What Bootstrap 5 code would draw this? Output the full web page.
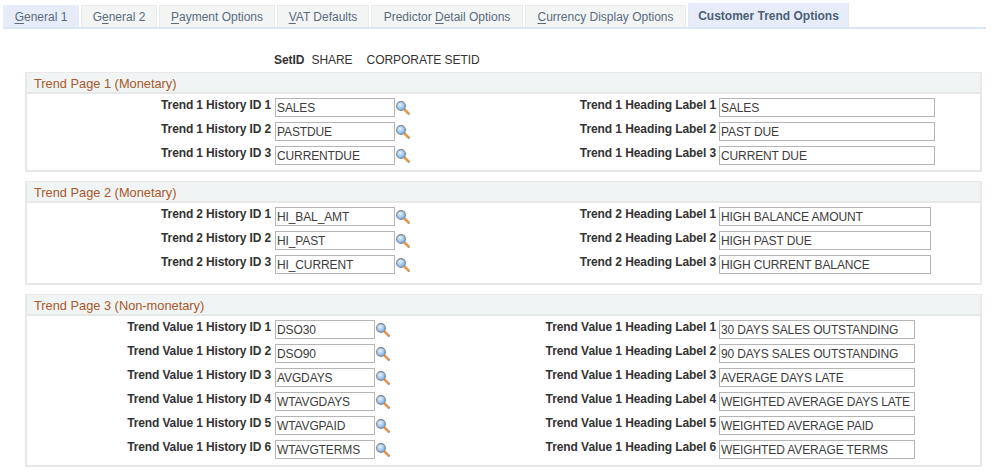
<!DOCTYPE html>
<html lang="en"><head><meta charset="utf-8"><title>Customer Trend Options</title>
<link href="https://cdn.jsdelivr.net/npm/bootstrap@5.3.0/dist/css/bootstrap.min.css" rel="stylesheet">
<style>
body{font-family:"Liberation Sans",Arial,sans-serif;font-size:12px;color:#333;background:#fff;line-height:14px;overflow:hidden}
.tabbar{margin:5px 8px 0 3px;height:24px;border-bottom:2px solid #dbe5f3;gap:2px;align-items:flex-end}
.tabi{height:22px;display:flex;align-items:center;justify-content:center;background:#f3f5f5;border:1px solid #e8eaea;border-bottom:0;color:#5b6b7c;font-size:12px}
.tabi u{text-underline-offset:2px}
.tabi.t-on{background:#e6edf8;border-color:#e6edf8}
.tabi.t-cur{height:24px;background:#e6edf8;border-color:#e3eaf5;color:#4c5f78;font-weight:700}
.setrow{margin:24px 0 0 274px;height:19px;gap:7px;color:#333;letter-spacing:-.05px;line-height:15px}
.setdesc{margin-left:7px}
.grp{margin:0 12px 9px 25px;border:2px solid #e8e8e8;border-top-width:1px}
.grp-h{height:21px;background:#f1f4f4;border-bottom:2px solid #e6e8e8;color:#a8582a;line-height:21px;padding-left:7px;margin:0;font-weight:400;font-size:12.8px}
.grp-b{padding:4px 0 0}
.grp-b.tail{padding-bottom:4px}
.grp-b.tail3{padding-bottom:1px}
.frow{height:24px;display:flex;align-items:flex-start}
.lbl{font-weight:700;text-align:right;flex:none;color:#333;letter-spacing:-.08px}
.lbl.l1{padding-right:1px;letter-spacing:-.14px}
.txt{flex:none;height:19px;border:1px solid #b5b5b5;background:#fff;padding:1px 0 0 1px;color:#3c3c3c;white-space:nowrap;overflow:hidden;line-height:16px;margin-left:3px;letter-spacing:-.12px}
.mag{flex:none;width:16px;height:16px;margin:2px 0 0 1px}
.w-a .l1,.w-b .l1,.w-c .l1{width:245px}
.w-a .i1,.w-b .i1{width:120px}.w-c .i1{width:100px}
.w-a .l2,.w-b .l2{width:304px}.w-c .l2{width:324px}
.w-a .i2{width:216px}.w-b .i2{width:212px}.w-c .i2{width:196px}
</style></head><body>
<svg width="0" height="0" class="d-block position-absolute"><defs>
<radialGradient id="lens" cx="40%" cy="35%" r="70%"><stop offset="0" stop-color="#e6f2fc"/><stop offset="1" stop-color="#6fa6de"/></radialGradient>
<symbol id="mg" viewBox="0 0 16 16">
<path d="M8.5 9.5l4 4" stroke="#e39a52" stroke-width="2.6" stroke-linecap="round"/>
<path d="M12.6 14.6l1-1" stroke="#8a8f96" stroke-width="1.2"/>
<circle cx="5" cy="6" r="4.4" fill="url(#lens)" stroke="#7c8794" stroke-width="1.1"/>
</symbol></defs></svg>

<div class="d-flex tabbar">
<div class="tabi t-on" style="width:76px"><span><u>G</u>eneral 1</span></div>
<div class="tabi" style="width:76px"><span>G<u>e</u>neral 2</span></div>
<div class="tabi" style="width:116px"><span><u>P</u>ayment Options</span></div>
<div class="tabi" style="width:92px"><span><u>V</u>AT Defaults</span></div>
<div class="tabi" style="width:152px"><span>Predictor <u>D</u>etail Options</span></div>
<div class="tabi" style="width:161px"><span><u>C</u>urrency Display Options</span></div>
<div class="tabi t-cur" style="width:161px"><span>Customer Trend Options</span></div>
</div>

<div class="d-flex setrow"><b>SetID</b><span>SHARE</span><span class="setdesc">CORPORATE SETID</span></div>

<section class="grp w-a"><h6 class="grp-h">Trend Page 1 (Monetary)</h6><div class="grp-b">
<div class="frow"><span class="lbl l1">Trend 1 History ID 1</span><span class="txt i1">SALES</span><svg class="mag"><use href="#mg"/></svg><span class="lbl l2">Trend 1 Heading Label 1</span><span class="txt i2">SALES</span></div>
<div class="frow"><span class="lbl l1">Trend 1 History ID 2</span><span class="txt i1">PASTDUE</span><svg class="mag"><use href="#mg"/></svg><span class="lbl l2">Trend 1 Heading Label 2</span><span class="txt i2">PAST DUE</span></div>
<div class="frow"><span class="lbl l1">Trend 1 History ID 3</span><span class="txt i1">CURRENTDUE</span><svg class="mag"><use href="#mg"/></svg><span class="lbl l2">Trend 1 Heading Label 3</span><span class="txt i2">CURRENT DUE</span></div>
</div></section>

<section class="grp w-b"><h6 class="grp-h">Trend Page 2 (Monetary)</h6><div class="grp-b tail">
<div class="frow"><span class="lbl l1">Trend 2 History ID 1</span><span class="txt i1">HI_BAL_AMT</span><svg class="mag"><use href="#mg"/></svg><span class="lbl l2">Trend 2 Heading Label 1</span><span class="txt i2">HIGH BALANCE AMOUNT</span></div>
<div class="frow"><span class="lbl l1">Trend 2 History ID 2</span><span class="txt i1">HI_PAST</span><svg class="mag"><use href="#mg"/></svg><span class="lbl l2">Trend 2 Heading Label 2</span><span class="txt i2">HIGH PAST DUE</span></div>
<div class="frow"><span class="lbl l1">Trend 2 History ID 3</span><span class="txt i1">HI_CURRENT</span><svg class="mag"><use href="#mg"/></svg><span class="lbl l2">Trend 2 Heading Label 3</span><span class="txt i2">HIGH CURRENT BALANCE</span></div>
</div></section>

<section class="grp w-c"><h6 class="grp-h">Trend Page 3 (Non-monetary)</h6><div class="grp-b tail3">
<div class="frow"><span class="lbl l1">Trend Value 1 History ID 1</span><span class="txt i1">DSO30</span><svg class="mag"><use href="#mg"/></svg><span class="lbl l2">Trend Value 1 Heading Label 1</span><span class="txt i2">30 DAYS SALES OUTSTANDING</span></div>
<div class="frow"><span class="lbl l1">Trend Value 1 History ID 2</span><span class="txt i1">DSO90</span><svg class="mag"><use href="#mg"/></svg><span class="lbl l2">Trend Value 1 Heading Label 2</span><span class="txt i2">90 DAYS SALES OUTSTANDING</span></div>
<div class="frow"><span class="lbl l1">Trend Value 1 History ID 3</span><span class="txt i1">AVGDAYS</span><svg class="mag"><use href="#mg"/></svg><span class="lbl l2">Trend Value 1 Heading Label 3</span><span class="txt i2">AVERAGE DAYS LATE</span></div>
<div class="frow"><span class="lbl l1">Trend Value 1 History ID 4</span><span class="txt i1">WTAVGDAYS</span><svg class="mag"><use href="#mg"/></svg><span class="lbl l2">Trend Value 1 Heading Label 4</span><span class="txt i2">WEIGHTED AVERAGE DAYS LATE</span></div>
<div class="frow"><span class="lbl l1">Trend Value 1 History ID 5</span><span class="txt i1">WTAVGPAID</span><svg class="mag"><use href="#mg"/></svg><span class="lbl l2">Trend Value 1 Heading Label 5</span><span class="txt i2">WEIGHTED AVERAGE PAID</span></div>
<div class="frow"><span class="lbl l1">Trend Value 1 History ID 6</span><span class="txt i1">WTAVGTERMS</span><svg class="mag"><use href="#mg"/></svg><span class="lbl l2">Trend Value 1 Heading Label 6</span><span class="txt i2">WEIGHTED AVERAGE TERMS</span></div>
</div></section>
<script src="https://cdn.jsdelivr.net/npm/bootstrap@5.3.0/dist/js/bootstrap.bundle.min.js"></script>
</body></html>
